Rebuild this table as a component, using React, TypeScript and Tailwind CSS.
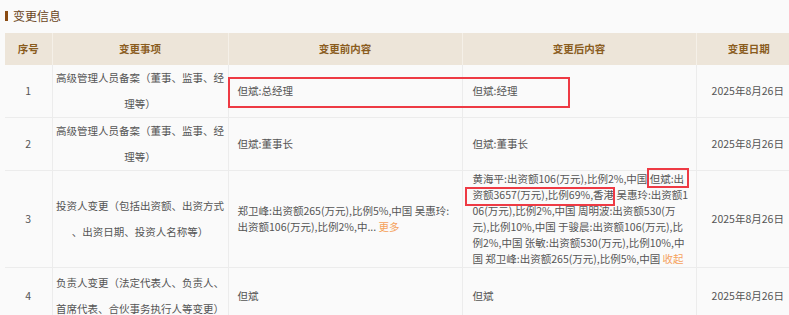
import React from "react";

type Row = {
  no: string;
  item: React.ReactNode;
  before: React.ReactNode;
  after: React.ReactNode;
  date: string;
  h: string;
};

const more = "text-[#f5a25d]";

const rows: Row[] = [
  {
    no: "1",
    item: (
      <>
        高级管理人员备案（董事、监事、经
        <br />
        理等）
      </>
    ),
    before: "但斌:总经理",
    after: "但斌:经理",
    date: "2025年8月26日",
    h: "h-[52px]",
  },
  {
    no: "2",
    item: (
      <>
        高级管理人员备案（董事、监事、经
        <br />
        理等）
      </>
    ),
    before: "但斌:董事长",
    after: "但斌:董事长",
    date: "2025年8月26日",
    h: "h-[53px]",
  },
  {
    no: "3",
    item: (
      <>
        投资人变更（包括出资额、出资方式
        <br />
        、出资日期、投资人名称等）
      </>
    ),
    before: (
      <span className="block leading-[16px]">
        郑卫峰:出资额265(万元),比例5%,中国 吴惠玲:
        <br />
        出资额106(万元),比例2%,中... <span className={more}>更多</span>
      </span>
    ),
    after: (
      <span className="block leading-[16px]">
        黄海平:出资额106(万元),比例2%,中国 但斌:出
        <br />
        资额3657(万元),比例69%,香港 吴惠玲:出资额1
        <br />
        06(万元),比例2%,中国 周明波:出资额530(万
        <br />
        元),比例10%,中国 于骏晨:出资额106(万元),比
        <br />
        例2%,中国 张敏:出资额530(万元),比例10%,中
        <br />
        国 郑卫峰:出资额265(万元),比例5%,中国 <span className={more}>收起</span>
      </span>
    ),
    date: "2025年8月26日",
    h: "h-[95px]",
  },
  {
    no: "4",
    item: (
      <>
        负责人变更（法定代表人、负责人、
        <br />
        首席代表、合伙事务执行人等变更）
      </>
    ),
    before: "但斌",
    after: "但斌",
    date: "2025年8月26日",
    h: "h-[56px]",
  },
];

export default function App() {
  return (
    <div
      className="w-[789px] h-[315px] overflow-hidden bg-[#fafafa] text-[#555]"
      style={{ fontFamily: '"Noto Sans CJK SC", "Noto Sans", sans-serif' }}
    >
      {/* Title */}
      <div className="h-[33px] flex items-center pl-[5px] pb-[1px]">
        <span className="w-[3px] h-[10px] bg-[#8a4b12] mr-[5px]" />
        <span className="text-[12px] text-[#6a4522]">变更信息</span>
      </div>

      <div className="relative w-[796px] ml-[5px]">
        <table className="w-[796px] table-fixed border-collapse text-[10.5px]">
          <colgroup>
            <col className="w-[47px]" />
            <col className="w-[176px]" />
            <col className="w-[234px]" />
            <col className="w-[234px]" />
            <col className="w-[105px]" />
          </colgroup>
          <thead>
            <tr className="h-[32px] bg-[#ede5d9] text-[#8a5c1e] font-bold">
              <th className="border-r border-[#f5f0e8]">序号</th>
              <th className="border-r border-[#f5f0e8]">变更事项</th>
              <th className="border-r border-[#f5f0e8]">变更前内容</th>
              <th className="border-r border-[#f5f0e8]">变更后内容</th>
              <th>变更日期</th>
            </tr>
          </thead>
          <tbody>
            {rows.map((r) => (
              <tr key={r.no} className={`${r.h} border-b border-[#ececec]`}>
                <td className="text-center border-r border-[#ececec]">{r.no}</td>
                <td className="text-center leading-[26px] whitespace-nowrap border-r border-[#ececec] px-[3px]">
                  {r.item}
                </td>
                <td className="pl-[9px] whitespace-nowrap border-r border-[#ececec]">{r.before}</td>
                <td className="pl-[10px] whitespace-nowrap border-r border-[#ececec]">{r.after}</td>
                <td className="text-center whitespace-nowrap pr-[2px]">{r.date}</td>
              </tr>
            ))}
          </tbody>
        </table>

        {/* highlight boxes */}
        <div className="absolute left-[223px] top-[44px] w-[342px] h-[31px] border-2 border-[#ee3a44] pointer-events-none" />
        <div className="absolute left-[642px] top-[135px] w-[42px] h-[20px] border-2 border-[#ee3a44] pointer-events-none" />
        <div className="absolute left-[460px] top-[154px] w-[150px] h-[19px] border-2 border-[#ee3a44] pointer-events-none" />
      </div>
    </div>
  );
}
